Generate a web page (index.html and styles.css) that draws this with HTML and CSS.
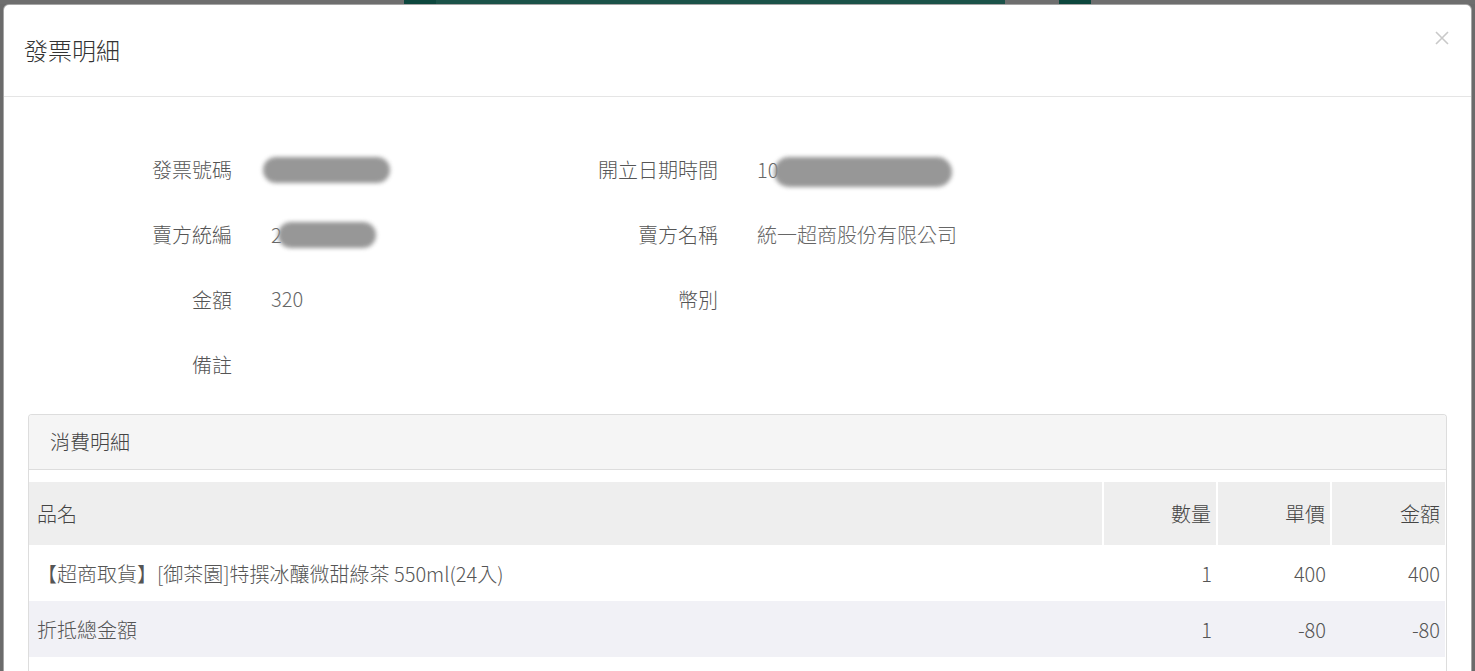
FILE: index.html
```html
<!DOCTYPE html>
<html lang="zh-Hant">
<head>
    <meta charset="UTF-8">
    <meta name="viewport" content="width=device-width, initial-scale=1.0">
    <title>發票明細</title>
    <link rel="stylesheet" href="styles.css">
</head>
<body>
    <div class="backdrop-top">
        <div class="seg seg-gray" style="width: 404px"></div>
        <div class="seg seg-teal-dark" style="width: 32px"></div>
        <div class="seg seg-teal" style="width: 569px"></div>
        <div class="seg seg-gray" style="width: 54px"></div>
        <div class="seg seg-teal-dark" style="width: 32px"></div>
        <div class="seg seg-gray"></div>
    </div>

    <div class="modal">
        <div class="modal-header">
            <h4 class="modal-title">發票明細</h4>
            <button class="close" type="button" aria-label="Close">
                <svg width="14" height="14" viewBox="0 0 14 14">
                    <path d="M1 1 L13 13 M13 1 L1 13" stroke="#c9c9c9" stroke-width="1.6" fill="none"/>
                </svg>
            </button>
        </div>

        <div class="modal-body">
            <div class="info">
                <div class="field">
                    <span class="label">發票號碼</span>
                    <span class="value"><span class="mask" style="width: 127px; margin-left: -8px"></span></span>
                </div>
                <div class="field">
                    <span class="label">開立日期時間</span>
                    <span class="value">10<span class="mask mask-tall" style="width: 178px; margin-left: -4px"></span></span>
                </div>
                <div class="field">
                    <span class="label">賣方統編</span>
                    <span class="value">2<span class="mask" style="width: 98px; margin-left: -4px"></span></span>
                </div>
                <div class="field">
                    <span class="label">賣方名稱</span>
                    <span class="value">統一超商股份有限公司</span>
                </div>
                <div class="field">
                    <span class="label">金額</span>
                    <span class="value value-up">320</span>
                </div>
                <div class="field">
                    <span class="label">幣別</span>
                    <span class="value"></span>
                </div>
                <div class="field">
                    <span class="label">備註</span>
                    <span class="value"></span>
                </div>
            </div>

            <div class="panel">
                <div class="panel-heading">消費明細</div>
                <div class="panel-body">
                    <table class="items">
                        <thead>
                            <tr>
                                <th class="col-name">品名</th>
                                <th class="col-num">數量</th>
                                <th class="col-num">單價</th>
                                <th class="col-num">金額</th>
                            </tr>
                        </thead>
                        <tbody>
                            <tr>
                                <td>【超商取貨】[御茶園]特撰冰釀微甜綠茶 550ml(24入)</td>
                                <td class="num">1</td>
                                <td class="num">400</td>
                                <td class="num">400</td>
                            </tr>
                            <tr class="alt">
                                <td>折抵總金額</td>
                                <td class="num">1</td>
                                <td class="num">-80</td>
                                <td class="num">-80</td>
                            </tr>
                            <tr>
                                <td></td>
                                <td class="num"></td>
                                <td class="num"></td>
                                <td class="num"></td>
                            </tr>
                        </tbody>
                    </table>
                </div>
            </div>
        </div>
    </div>
</body>
</html>
```

FILE: styles.css
```css
* {
    margin: 0;
    padding: 0;
    box-sizing: border-box;
}

html, body {
    height: 100%;
    overflow: hidden;
}

body {
    background-color: #6b6b6b;
    font-family: "Noto Sans CJK TC", "Noto Sans", sans-serif;
    font-weight: 300;
    color: #555;
}

.backdrop-top {
    display: flex;
    height: 4px;
}

.seg {
    height: 4px;
    flex-shrink: 0;
}

.seg-gray {
    background-color: #6e6e6e;
}

.seg-gray:last-child {
    flex: 1;
}

.seg-teal-dark {
    background-color: #0d473e;
}

.seg-teal {
    background-color: #1b5249;
}

.modal {
    margin: 0 3px;
    height: 667px;
    background-color: #fff;
    border: 1px solid rgba(0, 0, 0, 0.35);
    border-bottom: none;
    border-radius: 6px 6px 0 0;
    overflow: hidden;
}

.modal-header {
    display: flex;
    justify-content: space-between;
    align-items: flex-start;
    padding: 32px 22px 33px 20px;
    border-bottom: 1px solid #e5e5e5;
}

.modal-title {
    font-size: 24px;
    font-weight: 300;
    line-height: 26px;
    color: #333;
}

.close {
    background: none;
    border: none;
    width: 14px;
    height: 14px;
    margin-top: -6px;
    cursor: pointer;
}

.close svg {
    display: block;
}

.modal-body {
    padding: 40px 24px 24px;
}

.info {
    display: flex;
    flex-wrap: wrap;
    width: 972px;
    margin-bottom: 17px;
}

.field {
    display: flex;
    align-items: center;
    width: 486px;
    height: 65px;
    font-size: 20px;
}

.label {
    width: 204px;
    text-align: right;
    color: #555;
}

.value {
    display: flex;
    align-items: center;
    margin-left: 39px;
    color: #666;
}

.value-up {
    margin-top: -3px;
}

.mask {
    display: inline-block;
    height: 26px;
    border-radius: 13px;
    background-color: #8c8c8c;
    filter: blur(2px);
    opacity: 0.9;
}

.mask-tall {
    height: 30px;
    border-radius: 15px;
    margin-top: 4px;
}

.panel {
    border: 1px solid #ddd;
    border-radius: 4px 4px 0 0;
    border-bottom: none;
}

.panel-heading {
    height: 55px;
    padding-left: 21px;
    line-height: 54px;
    font-size: 20px;
    color: #444;
    background-color: #f5f5f5;
    border-bottom: 1px solid #ddd;
    border-radius: 3px 3px 0 0;
}

.panel-body {
    padding: 12px 1px 0 0;
}

.items {
    width: 100%;
    border-collapse: collapse;
    font-size: 20px;
    color: #555;
}

.items th {
    height: 63px;
    font-weight: 300;
    background-color: #eee;
    color: #444;
    border-left: 2px solid #fff;
}

.items th:first-child {
    border-left: none;
}

.items td {
    height: 56px;
}

.col-name {
    text-align: left;
    padding-left: 8px;
}

.col-num {
    width: 114px;
    text-align: right;
    padding-right: 5px;
}

.items td:first-child {
    padding-left: 8px;
}

.items td.num {
    text-align: right;
    padding-right: 5px;
}

.items tr.alt td {
    background-color: #f1f1f6;
}
```
